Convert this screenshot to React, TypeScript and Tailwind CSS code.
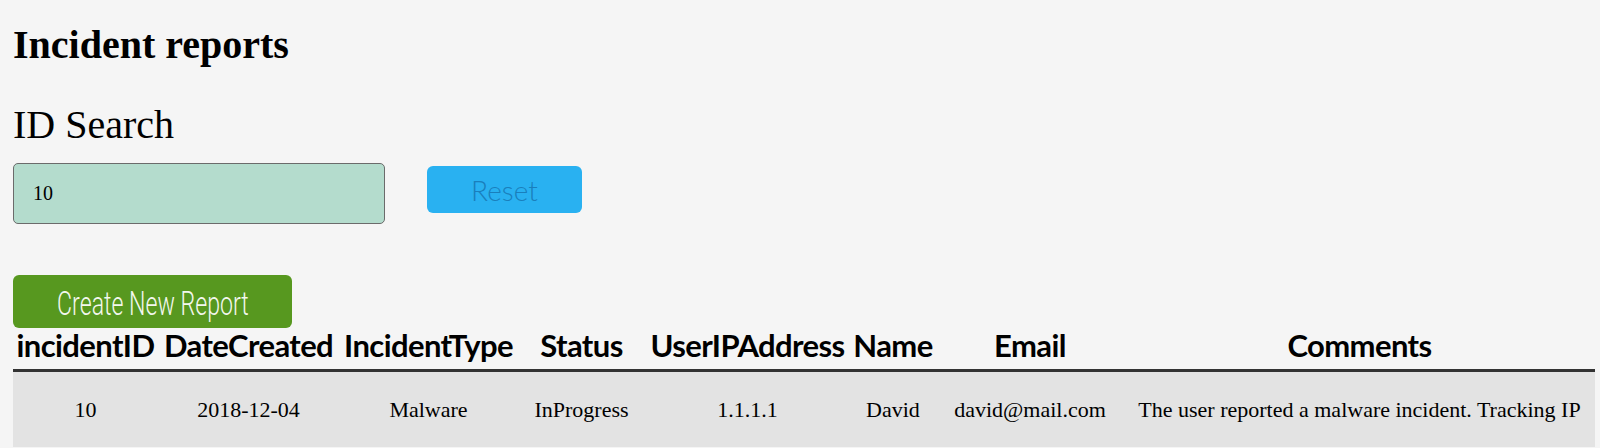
import React from 'react';

const columns = [
  { key: 'incidentID', width: 'w-[145px]' },
  { key: 'DateCreated', width: 'w-[181px]' },
  { key: 'IncidentType', width: 'w-[179px]' },
  { key: 'Status', width: 'w-[127px]' },
  { key: 'UserIPAddress', width: 'w-[205px]' },
  { key: 'Name', width: 'w-[86px]' },
  { key: 'Email', width: 'w-[188px]' },
  { key: 'Comments', width: 'w-[471px]' },
];

const rows = [
  {
    incidentID: '10',
    DateCreated: '2018-12-04',
    IncidentType: 'Malware',
    Status: 'InProgress',
    UserIPAddress: '1.1.1.1',
    Name: 'David',
    Email: 'david@mail.com',
    Comments: 'The user reported a malware incident. Tracking IP',
  },
];

const App: React.FC = () => {
  return (
    <div className="min-h-screen bg-[#f5f5f5] pl-[13px] pt-[22px] text-black font-['Liberation_Serif',serif]">
      {/* Title */}
      <h1 className="text-[40px] leading-[46px] font-bold">Incident reports</h1>

      {/* Search */}
      <h2 className="mt-[34px] text-[40px] leading-[46px] font-normal">ID Search</h2>
      <div className="mt-[15px] flex items-start">
        <input
          defaultValue="10"
          className="h-[61px] w-[372px] rounded-[5px] border-[1.5px] border-[#6b6b6b] bg-[#b4dccd] pl-[19px] text-[20px] text-black outline-none font-['Liberation_Serif',serif]"
        />
        <button className="ml-[42px] mt-[3px] h-[47px] w-[155px] rounded-[6px] bg-[#29b1f1] text-[28px] font-light text-[#1a7fbc] font-['Lato',sans-serif]">
          Reset
        </button>
      </div>

      {/* Create */}
      <button className="mt-[51px] flex h-[53px] w-[279px] items-center justify-center rounded-[6px] bg-[#57981f] pt-[2px] text-[#f3f7ee]">
        <span className="inline-block scale-x-[0.68] whitespace-nowrap text-[34px] leading-[40px] font-light font-['Roboto',sans-serif]">
          Create New Report
        </span>
      </button>

      {/* Table */}
      <table className="w-[1582px] table-fixed border-collapse">
        <colgroup>
          {columns.map((c) => (
            <col key={c.key} className={c.width} />
          ))}
        </colgroup>
        <thead>
          <tr className="border-b-[3px] border-[#333333]">
            {columns.map((c) => (
              <th
                key={c.key}
                className="whitespace-nowrap pb-[7px] text-center text-[31px] font-bold leading-[34px] tracking-[-0.6px] font-['Lato',sans-serif]"
              >
                {c.key}
              </th>
            ))}
          </tr>
        </thead>
        <tbody>
          {rows.map((r) => (
            <tr key={r.incidentID} className="bg-[#e3e3e3]">
              {columns.map((c) => (
                <td
                  key={c.key}
                  className="whitespace-nowrap py-[25px] text-center text-[22px] leading-[25px] font-['Liberation_Serif',serif]"
                >
                  {r[c.key as keyof typeof r]}
                </td>
              ))}
            </tr>
          ))}
        </tbody>
      </table>
    </div>
  );
};

export default App;
